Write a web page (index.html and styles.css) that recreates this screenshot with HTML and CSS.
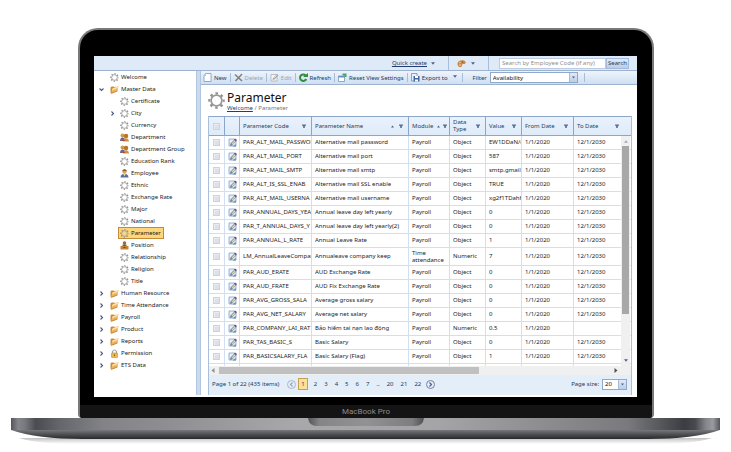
FILE: index.html
```html
<!DOCTYPE html>
<html lang="en">
<head>
<meta charset="utf-8">
<title>Parameter</title>
<link rel="stylesheet" href="styles.css">
</head>
<body>
<svg class="sprite" aria-hidden="true">
  <symbol id="gear" viewBox="0 0 20 20"><circle cx="10" cy="10" r="8.4" fill="none" stroke="#8f8f8f" stroke-width="2.6" stroke-dasharray="3 3.597" stroke-dashoffset="1.5"/><circle cx="10" cy="10" r="6.300" fill="none" stroke="#999" stroke-width="2"/></symbol>
  <symbol id="folder" viewBox="0 0 18 18"><path d="M1 5l2-2h4l2 1 2-1v4L3 16H1z" fill="#c98d3f"/><path d="M2 17L5 7l12-5-2 10z" fill="#eeb25a"/><path d="M5 7l12-5-1 4L4 11z" fill="#ffdf9f"/><path d="M2 17l13-5" stroke="#a8691f" stroke-width="1.4"/></symbol>
  <symbol id="people" viewBox="0 0 18 18"><circle cx="5" cy="5" r="4" fill="#d69a45"/><path d="M0 16c0-10 11-9 11 0z" fill="#5d6c9c"/><circle cx="12" cy="6" r="4.500" fill="#b9742d"/><path d="M6 17c0-9 12-9 12 0z" fill="#cf9140"/><path d="M3 16l4-4 4 4z" fill="#b0532f"/></symbol>
  <symbol id="person" viewBox="0 0 18 18"><circle cx="9" cy="5" r="4.500" fill="#dca251"/><path d="M4 4q5-7 10 0z" fill="#8b5f2c"/><path d="M1 17c0-10 16-10 16 0z" fill="#536f9e"/><path d="M6 9h6l-3 6z" fill="#f2d392"/></symbol>
  <symbol id="position" viewBox="0 0 18 18"><circle cx="9" cy="4" r="3.500" fill="#9a6931"/><path d="M5 7h8v6H5z" fill="#7a5a3a"/><path d="M1 10h16v7H1z" fill="#c48438"/><path d="M7 12h4v2H7z" fill="#754714"/></symbol>
  <symbol id="lock" viewBox="0 0 18 18"><path d="M5 9V5q4-6 8 0v4" fill="none" stroke="#a5a5a5" stroke-width="2.400"/><rect x="3" y="8" width="12" height="9" rx="1" fill="#efb84e" stroke="#b6812c"/><path d="M9 11v3" stroke="#79531a" stroke-width="2"/></symbol>
  <symbol id="new" viewBox="0 0 18 18"><path d="M5 1h11v16H2V5z" fill="#fff" stroke="#6e9acb" stroke-width="1.600"/><path d="M2 6l4-5v5z" fill="#a9c9ec"/></symbol>
  <symbol id="delete" viewBox="0 0 18 18"><path d="M2 3l14 13M16 2L3 16" stroke="#808080" stroke-width="3" fill="none"/></symbol>
  <symbol id="edit" viewBox="0 0 18 18"><path d="M2 2h11l3 4v10H2z" fill="#e3effb" stroke="#7fa3cc" stroke-width="1.600"/><path d="M4 16l1-5 7-7 4 3-8 8z" fill="#6f84a3"/><path d="M7 11l6-6 2 2-6 6z" fill="#f1d28b"/><path d="M12 3l2-2 4 3-2 3z" fill="#6b4a91"/><path d="M9 17l6-5 1 5z" fill="#5d8fc9"/></symbol>
  <symbol id="edit-off" viewBox="0 0 18 18"><path d="M2 3h12v13H2z" fill="#f5f5f5" stroke="#aaa" stroke-width="1.400"/><path d="M5 14l1-4 8-8 3 3-8 8z" fill="#aaa"/><path d="M8 10l5-5" stroke="#eee" stroke-width="1.500"/></symbol>
  <symbol id="refresh" viewBox="0 0 18 18"><path d="M14.500 12a6.500 6.500 0 1 1-1-7" fill="none" stroke="#2f8f3c" stroke-width="4"/><path d="M8 8h10V0z" fill="#2f8f3c"/></symbol>
  <symbol id="reset" viewBox="0 0 18 18"><path d="M1 6h12v11H1z" fill="#fff" stroke="#6a91bd" stroke-width="1.500"/><path d="M1 6h12v3H1z" fill="#6a91bd"/><path d="M9 1h8v7h-4V5H9z" fill="#4aa36b"/></symbol>
  <symbol id="export" viewBox="0 0 18 18"><path d="M1 1h11v15H1z" fill="#e8effa" stroke="#6782a6" stroke-width="1.400"/><path d="M5 6h12v11H5z" fill="#44679e"/><path d="M8 6h6v4H8zM8 13h6v4H8z" fill="#fff"/></symbol>
  <symbol id="palette" viewBox="0 0 18 18"><path d="M1 11C0 4 8 1 14 3c6 3 3 8-1 7-4-1-2 5-5 6-3 1-6-1-7-5z" fill="#cf8744"/><circle cx="6" cy="7" r="1.600" fill="#f6d18a"/><circle cx="11" cy="6" r="1.600" fill="#8a5a3c"/><circle cx="6" cy="12" r="1.600" fill="#f7e2c0"/></symbol>
  <symbol id="down" viewBox="0 0 10 6"><path d="M0 0h10L5 6z" fill="#4d6286"/></symbol>
  <symbol id="up" viewBox="0 0 10 6"><path d="M0 6h10L5 0z" fill="#4d6286"/></symbol>
  <symbol id="funnel" viewBox="0 0 10 10"><path d="M0 1h10v2L7 6v4H3V6L0 3z" fill="#587096"/></symbol>
  <symbol id="chev" viewBox="0 0 10 10"><path d="M3 1l4 4-4 4" fill="none" stroke="#4a5785" stroke-width="2.200"/></symbol>
  <symbol id="tri" viewBox="0 0 10 10"><path d="M3 0l6 5-6 5z" fill="#505050"/></symbol>
</svg>

<div class="laptop">
  <div class="lid">
    <div class="screen">
      <header class="topbar">
        <a class="link quick" href="#">Quick create</a>
        <svg class="caret"><use href="#down"/></svg>
        <span class="rule"></span>
        <button class="theme" aria-label="Theme"><svg class="icon"><use href="#palette"/></svg><svg class="caret"><use href="#down"/></svg></button>
        <span class="rule"></span>
        <form class="search">
          <input type="text" aria-label="Search" placeholder="Search by Employee Code (if any)">
          <button type="button">Search</button>
        </form>
      </header>
      <div class="workspace">
        <nav class="tree" id="tree" aria-label="Navigation"></nav>
        <div class="splitter"></div>
        <main class="main">
          <div class="toolbar">
            <button><svg class="icon"><use href="#new"/></svg>New</button><span class="rule"></span>
            <button disabled><svg class="icon"><use href="#delete"/></svg>Delete</button><span class="rule"></span>
            <button disabled><svg class="icon"><use href="#edit-off"/></svg>Edit</button><span class="rule"></span>
            <button><svg class="icon"><use href="#refresh"/></svg>Refresh</button><span class="rule"></span>
            <button><svg class="icon"><use href="#reset"/></svg>Reset View Settings</button><span class="rule"></span>
            <button class="export"><svg class="icon"><use href="#export"/></svg>Export to<svg class="caret"><use href="#down"/></svg></button><span class="rule"></span>
            <label class="filter" for="filter">Filter</label>
            <span class="combo wide"><select id="filter"><option>Availability</option></select><svg class="caret"><use href="#down"/></svg></span>
            <span class="rule last"></span>
          </div>
          <section class="content">
            <div class="heading">
              <svg class="title-icon"><use href="#gear"/></svg>
              <div>
                <h1>Parameter</h1>
                <p class="crumbs"><a class="link" href="#">Welcome</a> / Parameter</p>
              </div>
            </div>
            <div class="grid">
              <div class="rows">
                <table>
                  <colgroup><col class="c-check"><col class="c-edit"><col class="c-code"><col class="c-name"><col class="c-module"><col class="c-type"><col class="c-value"><col class="c-from"><col></colgroup>
                  <thead><tr id="head"></tr></thead>
                  <tbody id="body"></tbody>
                </table>
                <div class="vscroll"><svg class="caret light"><use href="#up"/></svg><span class="vthumb"></span><svg class="caret"><use href="#down"/></svg></div>
              </div>
              <div class="hscroll"><svg class="chev back"><use href="#tri"/></svg><span class="hthumb"></span><svg class="chev"><use href="#tri"/></svg></div>
              <footer class="pager">
                <span class="summary">Page 1 of 22 (435 items)</span>
                <button class="round" disabled aria-label="Previous"><svg class="chev back"><use href="#chev"/></svg></button>
                <span class="pages" id="pages"></span>
                <button class="round" aria-label="Next"><svg class="chev"><use href="#chev"/></svg></button>
                <label class="size" for="size">Page size:</label>
                <span class="combo"><select id="size"><option>20</option></select><svg class="caret"><use href="#down"/></svg></span>
              </footer>
            </div>
          </section>
        </main>
      </div>
    </div>
    <div class="brand">MacBook Pro</div>
  </div>
  <svg class="base" viewBox="0 0 709 28" preserveAspectRatio="none" aria-hidden="true">
    <defs>
      <linearGradient id="deck"><stop offset="0" stop-color="#55565c"/><stop offset=".01" stop-color="#85868c"/><stop offset=".02" stop-color="#77787e"/><stop offset=".035" stop-color="#4b4c52"/><stop offset=".07" stop-color="#66676c"/><stop offset=".13" stop-color="#828287"/><stop offset=".4" stop-color="#a8a8aa"/><stop offset=".6" stop-color="#a5a5a7"/><stop offset=".87" stop-color="#7a7a7e"/><stop offset=".95" stop-color="#3c3d42"/><stop offset=".965" stop-color="#48494e"/><stop offset=".98" stop-color="#85868c"/><stop offset=".99" stop-color="#9a9ba1"/><stop offset="1" stop-color="#55565c"/></linearGradient>
      <linearGradient id="under" x2="0" y2="1"><stop offset="0" stop-color="#77787c"/><stop offset=".5" stop-color="#4d4e52"/><stop offset="1" stop-color="#27282b"/></linearGradient>
      <linearGradient id="notch"><stop offset="0" stop-color="#555559"/><stop offset=".1" stop-color="#858589"/><stop offset=".5" stop-color="#929295"/><stop offset=".9" stop-color="#7d7d80"/><stop offset="1" stop-color="#505054"/></linearGradient>
      <linearGradient id="shade" x2="0" y2="1"><stop offset="0" stop-color="#999"/><stop offset="1" stop-color="#fff"/></linearGradient>
    </defs>
    <path d="M8 20h693q-20 6-60 6H68q-40 0-60-6z" fill="url(#shade)" opacity=".6"/>
    <path d="M0 12h709q-26 9-72 9H72Q26 21 0 12z" fill="url(#under)"/>
    <path d="M0 0h709v12H0z" fill="url(#deck)"/>
    <path d="M297 0h116q-1 8-9 8h-98q-8 0-9-8z" fill="url(#notch)"/>
  </svg>
</div>
<script src="app.js"></script>
</body>
</html>
```
FILE: styles.css
```css
* { box-sizing: border-box; }
body { margin: 0; padding: 28px 11px 0; background: #fff; color: #1c1c1c; font: 6px/8px "Noto Sans", "DejaVu Sans", sans-serif; }
button, input, select { font: inherit; color: inherit; margin: 0; padding: 0; border: 0; background: none; border-radius: 0; }
a { color: inherit; text-decoration: none; }
svg { display: block; flex: none; }
.sprite { position: absolute; width: 0; height: 0; }
.icon { width: 9px; height: 9px; }
.caret { width: 4px; height: 3px; }
.chev { width: 5px; height: 5px; }
.back { transform: scaleX(-1); }
.link { color: #1e3f76; text-decoration: underline; }
.rule { flex: none; width: 1px; align-self: stretch; background: #a9bedb; }

.lid { margin: 0 66px 0 67px; padding: 26px 15px 0 14px; background: #000; border: 2px solid #77797b; border-bottom: 0; border-radius: 20px 20px 4px 4px; }
.screen { background: #fff; padding-bottom: 2px; }
.brand { margin: 8px -15px 0 -14px; background: #141414; color: #8b8b8b; font: 8px/13px Roboto, sans-serif; text-align: center; border-radius: 0 0 3px 3px; }
.base { width: 100%; height: 28px; }

.topbar { display: flex; align-items: center; justify-content: flex-end; height: 15px; padding: 0 8px 0 0; background: #deeaf8; border-bottom: 1px solid #9db2d1; }
.topbar .caret { margin-left: 4px; }
.topbar .rule { margin: 0 8px 0 13px; }
.topbar .theme { display: flex; align-items: center; }
.theme .caret { margin-left: 5px; }
.search { display: flex; height: 11px; margin-left: 2px; }
.search input { width: 107px; padding: 0 2px; background: #fff; border: 1px solid #bccbe0; }
.search input::placeholder { color: #8f8f8f; opacity: 1; }
.search button { width: 23px; background: linear-gradient(#dfeafa, #b9cdea); border: 1px solid #a3badb; color: #1e395b; }

.workspace { display: flex; }
.tree { width: 102px; flex: none; }
.node { display: flex; align-items: center; height: 12px; padding-left: 5px; }
.node .chev, .node .gap { width: 5px; flex: none; margin-right: 5px; }
.node.child { padding-left: 16px; }
.node.open .chev { transform: rotate(90deg); }
.node a { display: flex; align-items: center; gap: 2px; height: 12px; padding: 0 2px 0 1px; white-space: nowrap; }
.node a[aria-current] { background: #fbd67b; border: 1px solid #c48a36; margin-left: -1px; }
.node.child .gap { margin-right: 4px; }
.node.child .chev { margin-right: 4px; }
.splitter { flex: none; width: 5px; background: #cbdaee; border: solid #b2c5df; border-width: 0 1px; }

.main { flex: 1; min-width: 0; display: flex; flex-direction: column; }
.toolbar { display: flex; align-items: center; height: 14px; padding: 1px 2px; background: linear-gradient(#eef4fc, #cfdff3); border-bottom: 1px solid #9db2d1; color: #1e395b; white-space: nowrap; }
.toolbar .rule { margin: 1px 3px; }
.toolbar .last { margin-left: 6px; }
.toolbar button { display: flex; align-items: center; gap: 2px; }
.toolbar button:disabled { color: #a0a6ae; }
.export .caret { margin: 0 2px 2px 3px; }
.toolbar .filter { margin: 0 3px 0 7px; }
.combo { display: flex; align-items: center; width: 25px; height: 11px; background: #fff; border: 1px solid #8fa9cb; }
.combo.wide { width: 88px; }
.combo select { appearance: none; flex: 1; min-width: 0; height: 9px; padding-left: 2px; color: #111; outline: 0; }
.combo .caret { width: 8px; height: 9px; padding: 3px 2px; background: linear-gradient(#e1eaf7, #bccde5); border-left: 1px solid #a3badb; }
.content { padding: 6px 5px 0 7px; }
.heading { display: flex; gap: 2px; height: 25px; }
.title-icon { width: 17px; height: 17px; margin-top: 1px; }
h1 { margin: 0; font: 12px/13px "Noto Sans", sans-serif; color: #111; }
.crumbs { margin: 0; color: #777; }

.grid { border: solid #a8bfdd; border-width: 0 1px; background: #e3eef9; }
.rows { position: relative; background: #fff; }
table { width: 100%; table-layout: fixed; border-collapse: separate; border-spacing: 0; }
.c-check { width: 16px; }
.c-edit { width: 15px; }
.c-code { width: 72px; }
.c-name { width: 97px; }
.c-module { width: 41px; }
.c-type, .c-value { width: 36px; }
.c-from { width: 52px; }
th { height: 20px; padding: 0 0 0 3px; background: linear-gradient(#e9f2fc, #dfebf9); border: solid #8ba6c9; border-width: 1px 1px 1px 0; font-weight: 400; text-align: left; color: #283e60; line-height: 7px; }
th:last-child { border-right: 0; }
.th { display: flex; align-items: center; gap: 5px; padding-right: 5px; }
th:last-child .th { padding-right: 12px; }
.th span { flex: 1; }
.th .caret { width: 3px; }
.c-tight { gap: 3px; padding-right: 2px; }
.funnel { width: 4px; height: 4px; }
td { height: 14px; padding: 0 0 0 3px; border: solid #d1dff0; border-width: 0 1px 1px 0; white-space: nowrap; overflow: hidden; text-overflow: clip; line-height: 7px; }
td.wrap { white-space: normal; }
td:last-child { border-right: 0; }
tr.tall td { height: 18px; }
tr.next td { height: 2px; border-bottom: 0; }
.tick { padding-left: 4px; }
.tick input { appearance: none; display: block; width: 7px; height: 7px; background: #dce1e8; border: 1px solid #cdd3db; box-shadow: inset 1px 1px #e9edf2; }
.pen { padding-left: 3px; }
.pen button { display: block; }
.vscroll { position: absolute; top: 20px; right: 1px; bottom: 0; width: 9px; display: flex; flex-direction: column; align-items: center; padding: 4px 0; background: #f0f0f0; }
.vthumb { width: 7px; height: 168px; margin: 3px 0 auto; background: #a8a8a8; }
.light { opacity: .5; }
.hscroll { display: flex; align-items: center; height: 9px; padding: 0 13px 0 2px; background: #f0f0f0; }
.hthumb { width: 260px; height: 7px; margin: 0 auto 0 3px; background: #c0c0c0; }
.hscroll .back { opacity: .6; }
.pager { display: flex; align-items: center; height: 20px; padding: 0 4px 2px 3px; color: #1e395b; }
.round { width: 9px; height: 9px; flex: none; display: grid; place-items: center; border: 1px solid #6f83a3; border-radius: 50%; }
.round:disabled { opacity: .5; }
.summary { margin-right: 8px; }
.pages { display: flex; align-items: center; gap: 7px; margin: 0 5px 0 2px; }
.pages [aria-current] { margin-right: -1px; padding: 1px 2px; background: #fbe09a; border: 1px solid #c9a04c; }
.size { margin: 0 3px 0 auto; }
```
FILE: app.js
```js
const use = (id, cls = 'icon') => `<svg class="${cls}"><use href="#${id}"/></svg>`;

// [label, icon, level, expander]
const nodes = [
  ['Welcome', 'gear', 1], ['Master Data', 'folder', 1, 'open'],
  ['Certificate', 'gear', 2], ['City', 'gear', 2, 'closed'], ['Currency', 'gear', 2],
  ['Department', 'people', 2], ['Department Group', 'people', 2], ['Education Rank', 'gear', 2],
  ['Employee', 'person', 2], ['Ethnic', 'gear', 2], ['Exchange Rate', 'gear', 2],
  ['Major', 'gear', 2], ['National', 'gear', 2], ['Parameter', 'gear', 2],
  ['Position', 'position', 2], ['Relationship', 'gear', 2], ['Religion', 'gear', 2], ['Title', 'gear', 2],
  ['Human Resource', 'folder', 1, 'closed'], ['Time Attendance', 'folder', 1, 'closed'],
  ['Payroll', 'folder', 1, 'closed'], ['Product', 'folder', 1, 'closed'],
  ['Reports', 'folder', 1, 'closed'], ['Permission', 'lock', 1, 'closed'], ['ETS Data', 'folder', 1, 'closed']
];
document.getElementById('tree').innerHTML = nodes.map(([label, icon, level, state]) =>
  `<div class="node ${level === 2 ? 'child' : ''} ${state || ''}">${state ? use('chev', 'chev') : '<span class="gap"></span>'}<a href="#"${label === 'Parameter' ? ' aria-current="page"' : ''}>${use(icon)}${label}</a></div>`).join('');

const heads = ['Parameter Code', 'Parameter Name', 'Module', 'Data Type', 'Value', 'From Date', 'To Date'];
document.getElementById('head').innerHTML =
  '<th class="tick"><input type="checkbox" aria-label="Select all"></th><th></th>' +
  heads.map((h, i) => `<th><div class="th${h === 'Module' ? ' c-tight' : ''}"><span>${h}</span>${i === 1 || i === 2 ? use('up', 'caret') : ''}${use('funnel', 'funnel')}</div></th>`).join('');

const D = '12/1/2030';
const rows = [
  ['PAR_ALT_MAIL_PASSWORD', 'Alternative mail password', 'Payroll', 'Object', 'EW1DDaN/dQ', D],
  ['PAR_ALT_MAIL_PORT', 'Alternative mail port', 'Payroll', 'Object', '587', D],
  ['PAR_ALT_MAIL_SMTP', 'Alternative mail smtp', 'Payroll', 'Object', 'smtp.gmail', D],
  ['PAR_ALT_IS_SSL_ENAB', 'Alternative mail SSL enable', 'Payroll', 'Object', 'TRUE', D],
  ['PAR_ALT_MAIL_USERNA', 'Alternative mail username', 'Payroll', 'Object', 'xg2f1TDahH', D],
  ['PAR_ANNUAL_DAYS_YEA', 'Annual leave day left yearly', 'Payroll', 'Object', '0', D],
  ['PAR_T_ANNUAL_DAYS_Y', 'Annual leave day left yearly(2)', 'Payroll', 'Object', '0', D],
  ['PAR_ANNUAL_L_RATE', 'Annual Leave Rate', 'Payroll', 'Object', '1', D],
  ['LM_AnnualLeaveCompany', 'Annualeave company keep', 'Time attendance', 'Numeric', '7', D],
  ['PAR_AUD_ERATE', 'AUD Exchange Rate', 'Payroll', 'Object', '0', D],
  ['PAR_AUD_FRATE', 'AUD Fix Exchange Rate', 'Payroll', 'Object', '0', D],
  ['PAR_AVG_GROSS_SALA', 'Average gross salary', 'Payroll', 'Object', '0', D],
  ['PAR_AVG_NET_SALARY', 'Average net salary', 'Payroll', 'Object', '0', D],
  ['PAR_COMPANY_LAI_RAT', 'Bảo hiểm tai nạn lao động', 'Payroll', 'Numeric', '0.5', ''],
  ['PAR_TAS_BASIC_S', 'Basic Salary', 'Payroll', 'Object', '0', D],
  ['PAR_BASICSALARY_FLA', 'Basic Salary (Flag)', 'Payroll', 'Object', '1', D]
];
document.getElementById('body').innerHTML = rows.map(([code, name, module, type, value, to]) =>
  `<tr class="${module === 'Payroll' ? '' : 'tall'}"><td class="tick"><input type="checkbox" aria-label="Select ${code}"></td><td class="pen"><button aria-label="Edit ${code}">${use('edit')}</button></td><td>${code}</td><td>${name}</td><td class="wrap">${module}</td><td>${type}</td><td>${value}</td><td>1/1/2020</td><td>${to}</td></tr>`).join('') +
  `<tr class="next">${'<td></td>'.repeat(9)}</tr>`;

document.getElementById('pages').innerHTML = ['1', '2', '3', '4', '5', '6', '7', '..', '20', '21', '22'].map((p) =>
  p === '..' ? '<span>..</span>' : `<a href="#"${p === '1' ? ' aria-current="page"' : ''}>${p}</a>`).join('');
```
